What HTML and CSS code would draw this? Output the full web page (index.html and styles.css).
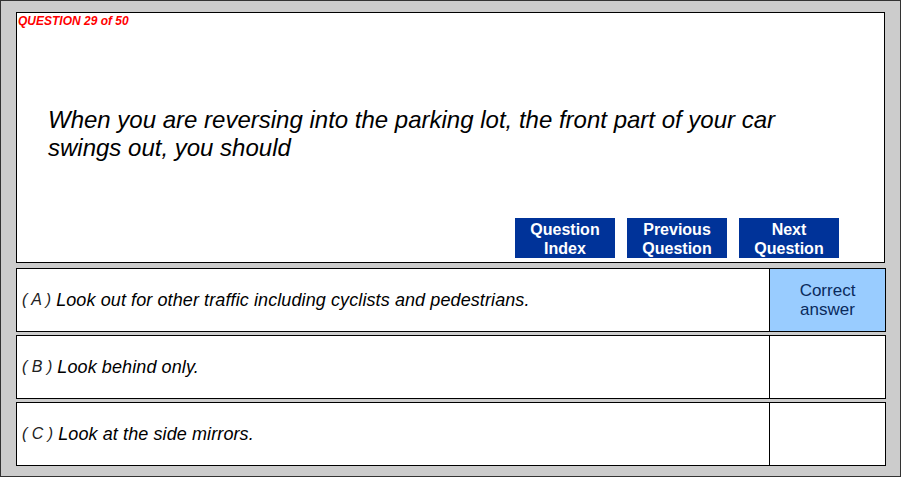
FILE: index.html
```html
<!DOCTYPE html>
<html>
<head>
<meta charset="utf-8">
<link rel="stylesheet" href="styles.css">
</head>
<body>
<div class="frame">
  <div class="question-box">
    <div class="q-header">QUESTION 29 of 50</div>
    <div class="q-text">When you are reversing into the parking lot, the front part of your car<br>swings out, you should</div>
    <div class="nav">
      <div class="btn">Question<br>Index</div>
      <div class="btn">Previous<br>Question</div>
      <div class="btn">Next<br>Question</div>
    </div>
  </div>
  <div class="answers">
    <div class="row">
      <div class="opt"><span class="letter">( A )</span> Look out for other traffic including cyclists and pedestrians.</div>
      <div class="mark correct">Correct<br>answer</div>
    </div>
    <div class="row">
      <div class="opt"><span class="letter">( B )</span> Look behind only.</div>
      <div class="mark"></div>
    </div>
    <div class="row">
      <div class="opt"><span class="letter">( C )</span> Look at the side mirrors.</div>
      <div class="mark"></div>
    </div>
  </div>
</div>
</body>
</html>
```

FILE: styles.css
```css
html, body {
  margin: 0;
  padding: 0;
  background: #ffffff;
}
body {
  font-family: "Liberation Sans", Arial, sans-serif;
}
.frame {
  box-sizing: border-box;
  width: 901px;
  height: 477px;
  border: 1px solid #333333;
  background: #cccccc;
  padding: 11px 0 0 15px;
}
.question-box {
  box-sizing: border-box;
  width: 869px;
  height: 251px;
  border: 1px solid #000000;
  background: #ffffff;
  display: flex;
  flex-direction: column;
  padding: 0 0 4px 1px;
}
.q-header {
  padding-top: 1px;
  font-size: 12px;
  line-height: 14px;
  font-weight: bold;
  font-style: italic;
  color: #ff0000;
}
.q-text {
  margin-top: 78px;
  margin-left: 30px;
  font-size: 24px;
  line-height: 28px;
  font-style: italic;
  color: #000000;
}
.nav {
  margin-top: auto;
  display: flex;
  justify-content: flex-end;
  gap: 12px;
  padding-right: 45px;
}
.btn {
  box-sizing: border-box;
  width: 100px;
  height: 40px;
  padding-top: 2px;
  background: #003399;
  color: #ffffff;
  font-size: 16px;
  line-height: 19px;
  font-weight: bold;
  text-align: center;
}
.answers {
  margin-top: 5px;
  display: flex;
  flex-direction: column;
  gap: 3px;
}
.row {
  box-sizing: border-box;
  width: 870px;
  height: 64px;
  border: 1px solid #000000;
  background: #ffffff;
  display: flex;
}
.opt {
  flex: 1;
  display: flex;
  align-items: center;
  padding-left: 5px;
  font-size: 18px;
  letter-spacing: 0.1px;
  font-style: italic;
  color: #000000;
  white-space: pre;
}
.letter {
  font-size: 16px;
  letter-spacing: 0;
  color: #222222;
}
.mark {
  box-sizing: border-box;
  width: 116px;
  border-left: 1px solid #000000;
  display: flex;
  align-items: center;
  justify-content: center;
  text-align: center;
  font-size: 17px;
  line-height: 19px;
  color: #0a2a5c;
}
.mark.correct {
  background: #99ccff;
}
```
